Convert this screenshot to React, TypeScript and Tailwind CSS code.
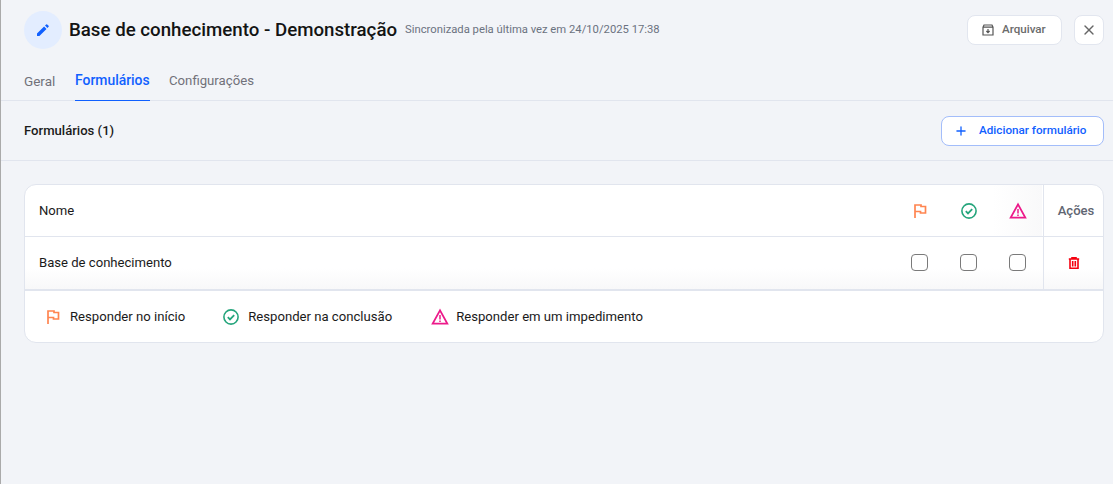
import { Plus, X } from 'lucide-react';

function FlagIcon() {
  return (
    <svg viewBox="0 0 16 16" fill="none" stroke="#ff8550" strokeWidth="1.7" className="w-4 h-4">
      <path d="M3 15V2h6v1.5h4.5V10H8.5V8.5H3" />
    </svg>
  );
}

function CheckIcon() {
  return (
    <svg viewBox="0 0 16 16" fill="none" stroke="#25a57c" strokeWidth="1.6" className="w-4 h-4">
      <circle cx="8" cy="8" r="7.1" />
      <path d="M4.8 8.2l2.2 2.2 4.2-4.2" strokeWidth="1.8" />
    </svg>
  );
}

function WarnIcon() {
  return (
    <svg viewBox="0 0 18 18" fill="none" stroke="#ec1a8a" className="w-[18px] h-[18px]">
      <path d="M9 2.4L1.7 15.6h14.6z" strokeWidth="1.8" />
      <path d="M9 7v4.6M9 12.6v1.4" strokeWidth="1.5" />
    </svg>
  );
}

function Box() {
  return <span className="block w-[17px] h-[17px] rounded-[4px] border-[1.5px] border-[#7a7a7a] bg-white" />;
}

export default function App() {
  return (
    <div className="w-[1113px] h-[484px] overflow-hidden bg-[#f2f4f8] border-l border-[#aaaaaa] font-['Roboto',sans-serif] text-[#1a1a1a]">
      <div className="flex items-center justify-between h-[60px] pl-[23px] pr-[9px]">
        <div className="flex items-center">
          <div className="w-[38px] h-[38px] rounded-full bg-[#e3edff] flex items-center justify-center">
            <svg viewBox="0 0 14 14" fill="#1060ff" className="w-[14px] h-[14px]">
              <path d="M1 10.6V13h2.4l7.1-7.1-2.4-2.4zM12.6 3.8a.7.7 0 000-1L11.2 1.4a.7.7 0 00-1 0L9 2.6 11.4 5z" />
            </svg>
          </div>
          <h1 className="ml-[7px] text-[18.7px] font-medium text-[#141414]">Base de conhecimento - Demonstração</h1>
          <span className="ml-[8px] text-[11.25px] text-[#6b7280]">Sincronizada pela última vez em 24/10/2025 17:38</span>
        </div>
        <div className="flex items-center gap-[12px]">
          <button className="flex items-center h-[30px] w-[95px] pl-[14px] rounded-lg border border-[#e2e6ef] bg-white text-[11.6px] font-medium text-[#6b6b6b]">
            <svg viewBox="0 0 12 12" fill="none" stroke="#555" strokeWidth="1.2" className="w-3 h-3 mr-[8px]">
              <path d="M1 3.2L2 1h8l1 2.2V11H1zM1 3.2h10" />
              <path d="M6 5v3.6M4.4 7L6 8.6 7.6 7" />
            </svg>
            Arquivar
          </button>
          <button className="flex items-center justify-center w-[30px] h-[30px] rounded-lg border border-[#e2e6ef] bg-white text-[#666]">
            <X className="w-4 h-4" />
          </button>
        </div>
      </div>
      <div className="flex h-[41px] pl-[23px] gap-[18px] border-b border-[#e1e5ee] text-[#71717a]">
        <span className="pt-[11px] w-[33px] text-[13.5px]">Geral</span>
        <span className="pt-[10px] w-[75px] whitespace-nowrap text-[13.9px] font-medium text-[#1060ff] border-b border-[#1060ff] h-[41px]">Formulários</span>
        <span className="pt-[11px] ml-px text-[13.2px]">Configurações</span>
      </div>
      <div className="flex items-center justify-between h-[60px] pl-[23px] pr-[9px] border-b border-[#e1e5ee]">
        <span className="text-[13.1px] font-medium">Formulários (1)</span>
        <button className="flex items-center h-[30px] w-[163px] pl-[12px] rounded-lg border border-[#a3bdfa] bg-white text-[11.7px] font-medium text-[#1060ff]">
          <Plus className="w-[14px] h-[14px] mr-[11px]" strokeWidth={2.25} />
          Adicionar formulário
        </button>
      </div>
      <div className="mt-[23px] ml-[23px] mr-[9px] rounded-xl border border-[#e1e5ee] bg-white overflow-hidden">
        <div className="flex h-[52px] border-b border-[#e1e5ee] text-[13.1px]">
          <div className="flex-1 flex items-center pl-[14px]">Nome</div>
          <div className="w-[49px] flex items-center justify-center"><FlagIcon /></div>
          <div className="w-[49px] flex items-center justify-center"><CheckIcon /></div>
          <div className="w-[49px] flex items-center justify-center bg-linear-to-r from-white to-[#f9f9fa]"><WarnIcon /></div>
          <div className="w-[60px] ml-[1px] border-l border-[#e1e5ee] flex items-center justify-center pl-[5px] font-medium text-[#5f6672]">Ações</div>
        </div>
        <div className="flex h-[54px] pb-[2px] border-b-2 border-[#e1e5ee] text-[13.1px] bg-linear-to-b from-white from-60% to-[#f8f8f9]">
          <div className="flex-1 flex items-center pl-[14px] pt-[2px]">Base de conhecimento</div>
          <div className="w-[49px] flex items-center justify-center"><Box /></div>
          <div className="w-[49px] flex items-center justify-center"><Box /></div>
          <div className="w-[49px] flex items-center justify-center"><Box /></div>
          <div className="w-[60px] ml-[1px] border-l border-[#e1e5ee] -mb-[2px] flex items-center justify-center">
            <svg viewBox="0 0 12 12" fill="none" stroke="#f5000f" strokeWidth="1.6" className="w-3 h-3">
              <path d="M0.8 2h10.4M4 2V.8h4V2M2 2v9.2h8V2M4.7 4v5.4M7.3 4v5.4" />
            </svg>
          </div>
        </div>
        <div className="flex items-center h-[51px] pl-[20px] text-[13.13px]">
          <div className="flex items-center gap-[9px] mr-[38px]"><FlagIcon />Responder no início</div>
          <div className="flex items-center gap-[9px] mr-[39px]"><CheckIcon />Responder na conclusão</div>
          <div className="flex items-center gap-[7px]"><WarnIcon />Responder em um impedimento</div>
        </div>
      </div>
    </div>
  );
}
